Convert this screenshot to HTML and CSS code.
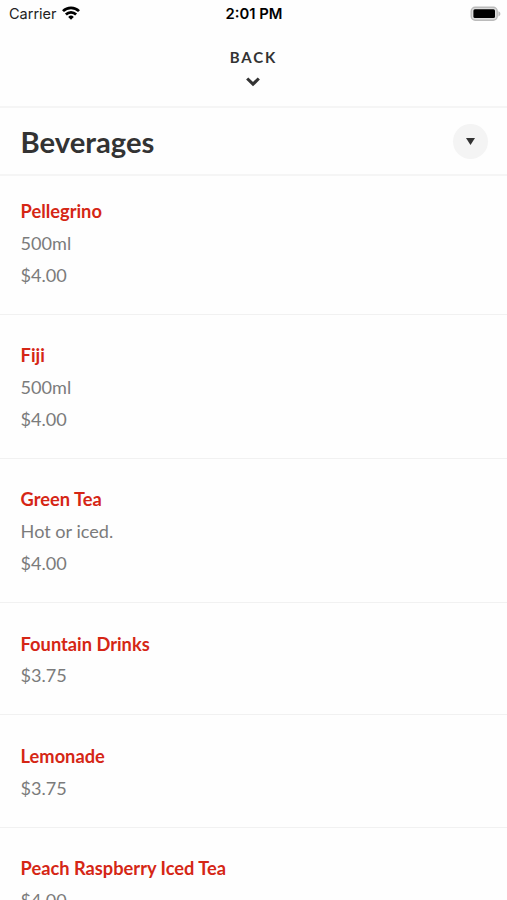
FILE: index.html
```
<!DOCTYPE html>
<html lang="en">
<head>
    <meta charset="UTF-8">
    <meta name="viewport" content="width=device-width, initial-scale=1.0">
    <title>Beverages</title>
    <link rel="stylesheet" href="styles.css">
</head>
<body>
    <div class="screen">
        <div class="status-bar">
            <div class="carrier">
                <span>Carrier</span>
                <svg class="wifi" width="18" height="14" viewBox="0 0 18 14" fill="none" stroke="#000" stroke-width="2.7">
                    <path d="M1 5.1a11.3 11.3 0 0 1 16 0"/>
                    <path d="M3.9 8.5a7.2 7.2 0 0 1 10.2 0"/>
                    <path d="M9 13.7L6.2 10.9a4 4 0 0 1 5.6 0z" fill="#000" stroke="none"/>
                </svg>
            </div>
            <div class="time">2:01 PM</div>
            <div class="battery">
                <svg width="31" height="16" viewBox="0 0 31 16">
                    <rect x="1.2" y="1.2" width="26" height="13" rx="4" fill="#ddd" stroke="#bbb" stroke-width="1.4"/>
                    <rect x="3.4" y="3.3" width="21.6" height="8.8" rx="1.5" fill="#000"/>
                    <path d="M28.4 5.3c2.6 1 2.6 4.2 0 5.2z" fill="#bbb"/>
                </svg>
            </div>
        </div>

        <div class="back">
            <span class="back-text">BACK</span>
            <svg width="14" height="10" viewBox="0 0 14 10" fill="none" stroke="#333" stroke-width="3.1">
                <path d="M1.2 1.5L7 7.2L12.8 1.5"/>
            </svg>
        </div>

        <div class="category">
            <h1>Beverages</h1>
            <button class="toggle" aria-label="Categories">
                <svg width="9" height="7" viewBox="0 0 9 7"><path d="M0 0h9L4.5 7z" fill="#333"/></svg>
            </button>
        </div>

        <ul class="menu">
            <li class="item">
                <h2>Pellegrino</h2>
                <p>500ml</p>
                <p>$4.00</p>
            </li>
            <li class="item">
                <h2 class="plain">Fiji</h2>
                <p>500ml</p>
                <p>$4.00</p>
            </li>
            <li class="item">
                <h2>Green Tea</h2>
                <p>Hot or iced.</p>
                <p>$4.00</p>
            </li>
            <li class="item">
                <h2>Fountain Drinks</h2>
                <p>$3.75</p>
            </li>
            <li class="item">
                <h2>Lemonade</h2>
                <p>$3.75</p>
            </li>
            <li class="item">
                <h2>Peach Raspberry Iced Tea</h2>
                <p>$4.00</p>
            </li>
        </ul>
    </div>
</body>
</html>
```
FILE: styles.css
```
*{
    box-sizing: border-box;
    margin: 0;
    padding: 0;
}
body{
    background: #fefefe;
    font-family: Lato, sans-serif;
    color: #333;
}
.screen{
    height: 900px;
    overflow: hidden;
}

/* status bar */
.status-bar{
    display: grid;
    grid-template-columns: 1fr auto 1fr;
    align-items: center;
    height: 27px;
    padding: 0 6px 0 9px;
    font-family: Inter, sans-serif;
    color: #000;
}
.carrier{
    display: flex;
    align-items: center;
    gap: 5px;
    font-size: 14.5px;
    color: #222;
}
.wifi{
    margin-top: -1px;
}
.time{
    font-size: 14.8px;
    font-weight: 600;
    margin-right: 2px;
}
.battery{
    display: flex;
    justify-content: flex-end;
}

.back{
    display: flex;
    flex-direction: column;
    align-items: center;
    height: 81px;
    padding-top: 20px;
    padding-right: 1px;
    border-bottom: 2px solid #f5f5f5;
}
.back-text{
    font-size: 15px;
    line-height: 20px;
    font-weight: 700;
    letter-spacing: 1.9px;
    margin-right: -1px;
    margin-bottom: 10px;
}

.category{
    display: flex;
    justify-content: space-between;
    align-items: center;
    height: 68px;
    padding: 0 19px 0 20.6px;
    border-bottom: 2px solid #f5f5f5;
}
.category h1{
    font-size: 29.2px;
    font-weight: 700;
}
.toggle{
    display: flex;
    align-items: center;
    justify-content: center;
    width: 35px;
    height: 35px;
    border: none;
    border-radius: 50%;
    background: #f4f4f4;
}

.menu{
    list-style: none;
}
.item{
    padding: 25.6px 20.6px 22.2px;
    border-bottom: 1px solid #f1f1f1;
    font-size: 18.1px;
    line-height: 31.8px;
}
.item:first-child{
    padding-top: 20px;
}
.item h2{
    font-size: 18.25px;
    font-weight: 700;
    color: #d52615;
}
/* keep the i dots on "Fiji" */
.item h2.plain{
    font-variant-ligatures: none;
}
.item p{
    color: #7b7b7b;
}
```
